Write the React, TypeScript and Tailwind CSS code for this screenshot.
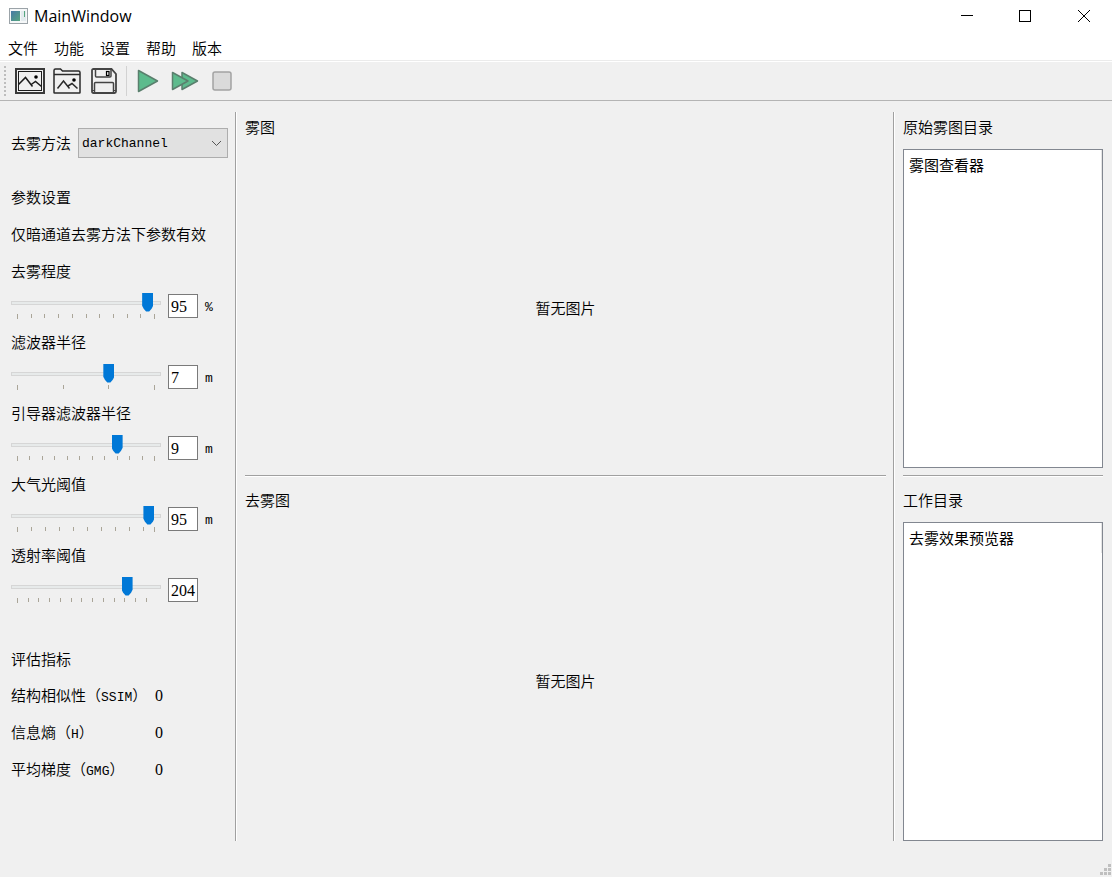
import React, { useState } from 'react';

type SliderDef = {
  id: string;
  label: string;
  min: number;
  max: number;
  step: number;
  initial: number;
  unit: string;
};

const SLIDERS: SliderDef[] = [
  { id: 'degree', label: '去雾程度', min: 0, max: 100, step: 10, initial: 95, unit: '%' },
  { id: 'radius', label: '滤波器半径', min: 1, max: 10, step: 3, initial: 7, unit: 'm' },
  { id: 'guided', label: '引导器滤波器半径', min: 1, max: 12, step: 1, initial: 9, unit: 'm' },
  { id: 'light', label: '大气光阈值', min: 1, max: 99, step: 10, initial: 95, unit: 'm' },
  { id: 'trans', label: '透射率阈值', min: 0, max: 255, step: 20, initial: 204, unit: '' },
];

const METRICS = [
  { name: '结构相似性', code: 'SSIM', value: '0' },
  { name: '信息熵', code: 'H', value: '0' },
  { name: '平均梯度', code: 'GMG', value: '0' },
];

const MENUS = ['文件', '功能', '设置', '帮助', '版本'];

const MONO = "font-['Liberation_Mono','Noto_Sans_CJK_SC',monospace] text-[13px]";
const DIGITS = "font-['Liberation_Serif','Noto_Sans_CJK_SC',serif] text-base";

// Length of the thumb's travel and where it starts inside the 150px track
const TRAVEL = 137;
const TRAVEL_START = 6;

const Ticks: React.FC<{ def: SliderDef }> = ({ def }) => {
  const values: number[] = [];
  for (let v = def.min; v < def.max; v += def.step) {
    // a mark right next to the end mark would be drawn twice
    if (def.max - v >= def.step / 2) values.push(v);
  }
  if (def.id !== 'trans') values.push(def.max);

  return (
    <svg width="150" height="5" className="block" fill="#aaa598" shapeRendering="crispEdges" aria-hidden="true">
      {values.map((v) => {
        const x = TRAVEL_START + Math.round(((v - def.min) / (def.max - def.min)) * TRAVEL);
        return <rect key={v} x={x} y="0" width="1" height={v === def.min || v === def.max ? 5 : 4} />;
      })}
    </svg>
  );
};

const ParamSlider: React.FC<{ def: SliderDef }> = ({ def }) => {
  const [value, setValue] = useState(def.initial);

  return (
    <div>
      <label htmlFor={def.id} className="block h-5 leading-5">{def.label}</label>
      <div className="flex items-center gap-[7px] pt-3 pb-[13px]">
        <div className="w-[150px]">
          <div className="pt-2 pb-[9px]">
            <input
              id={def.id}
              type="range"
              min={def.min}
              max={def.max}
              value={value}
              onChange={(e) => setValue(Number(e.target.value))}
              className="block h-1 w-full appearance-none border border-[#d6d6d6] bg-[#e7eaea] outline-none [&::-webkit-slider-thumb]:-mt-0.5 [&::-webkit-slider-thumb]:h-[19px] [&::-webkit-slider-thumb]:w-[11px] [&::-webkit-slider-thumb]:appearance-none [&::-webkit-slider-thumb]:bg-[#0078d7] [&::-webkit-slider-thumb]:[clip-path:polygon(0_0,100%_0,100%_70%,86%_85%,64%_100%,36%_100%,14%_85%,0_70%)]"
            />
          </div>
          <Ticks def={def} />
        </div>
        <input
          type="text"
          aria-label={def.label}
          value={value}
          onChange={(e) => setValue(Number(e.target.value) || 0)}
          className={`h-6 w-[30px] border border-[#7a7a7a] bg-white pt-0.5 pl-0.5 outline-none ${DIGITS}`}
        />
        <span className={`pt-1 ${MONO}`}>{def.unit}</span>
      </div>
    </div>
  );
};

const OpenImageIcon = () => (
  <svg width="30" height="26" viewBox="0 0 30 26" fill="none" stroke="#1c1c1c" strokeWidth="1.5">
    <rect x="1" y="1" width="28" height="24" stroke="#3a3a3a" strokeWidth="2" />
    <rect x="3.5" y="3.5" width="23" height="19" strokeWidth="1" />
    <path d="M3.500 16.500l7-7 7 9M15.500 17l5-3.500 6 5" />
    <circle cx="21" cy="9" r="1.8" fill="#000" stroke="none" />
  </svg>
);

const OpenFolderIcon = () => (
  <svg width="28" height="26" viewBox="0 0 28 26" fill="none" stroke="#2a2a2a" strokeWidth="1.5">
    <path d="M1 24.500v-22q0-1.500 1.500-1.500h5l2 2h16q1.500 0 1.500 1.500v20q0 .5-.5.5h-25q-.5 0-.5-.5zM1 6.500h26" />
    <path d="M4.500 20.500l6-7.500 6 7.500M15 18l4-2.500 5.500 5" />
    <circle cx="21" cy="12" r="1.8" fill="#000" stroke="none" />
  </svg>
);

const SaveIcon = () => (
  <svg width="26" height="26" viewBox="0 0 26 26" fill="none" stroke="#444" strokeWidth="1.8">
    <path d="M2.500 1h18l4.500 5v17.500q0 1.500-1.500 1.500h-21q-1.500 0-1.500-1.500v-21q0-1.500 1.500-1.500z" />
    <path d="M4.500 1v7q0 1 1 1h13.500q1 0 1-1v-7M3.500 25v-9.500q0-1 1-1h17q1 0 1 1v9.500" strokeWidth="1.5" />
    <rect x="15.500" y="3.500" width="2.500" height="4" stroke="#000" strokeWidth="1.2" />
    <path d="M1 22.500h2.500M22.500 22.500h2.500" strokeWidth="1" />
  </svg>
);

const PlayIcon = () => (
  <svg width="22" height="24" viewBox="0 0 22 24" fill="#5dbb8d" stroke="#5a7f6d" strokeWidth="1.5" strokeLinejoin="round">
    <path d="M1.500 1.500l19 10.500-19 10.500z" />
  </svg>
);

const FastForwardIcon = () => (
  <svg width="28" height="20" viewBox="0 0 28 20" fill="#5dbb8d" stroke="#5a7f6d" strokeWidth="1.5" strokeLinejoin="round">
    <path d="M11 1.500l15.500 8.500-15.500 8.500z" />
    <path d="M1.500 1.500l15.500 8.500-15.500 8.500z" />
  </svg>
);

const StopIcon = () => (
  <svg width="20" height="20" viewBox="0 0 20 20" fill="#dadada" stroke="#a3a3a3" strokeWidth="1.5">
    <rect x="1" y="1" width="18" height="18" rx="2" />
  </svg>
);

const ToolButton: React.FC<{ title: string; children: React.ReactNode }> = ({ title, children }) => (
  <button type="button" aria-label={title} className="flex h-full w-[37px] items-center justify-center">
    {children}
  </button>
);

const TitleBar = () => (
  <header className="flex h-8 items-center bg-white">
    <svg width="20" height="16" viewBox="0 0 20 16" className="ml-2 mr-1.5" aria-hidden="true">
      <defs>
        <linearGradient id="app-pane" x1="0" y1="0" x2="1" y2="1">
          <stop offset="0" stopColor="#4779a5" />
          <stop offset="1" stopColor="#57a67f" />
        </linearGradient>
      </defs>
      <rect x="1.5" y="0.5" width="18" height="15" fill="#f5f7f8" stroke="#9ba3a8" />
      <rect x="3" y="3" width="9" height="10" fill="url(#app-pane)" />
      <rect x="13" y="3" width="5" height="10" fill="#e3ebee" />
      <rect x="16" y="3" width="1" height="6" fill="#57a67f" />
    </svg>
    <h1 className="flex-1 font-['Open_Sans',sans-serif] text-base leading-5">MainWindow</h1>
    <div className="flex h-full">
      <button type="button" aria-label="最小化" className="flex w-[58px] items-center justify-center">
        <svg width="12" height="12" stroke="#000" shapeRendering="crispEdges"><path d="M0 5.500h12" /></svg>
      </button>
      <button type="button" aria-label="最大化" className="flex w-[58px] items-center justify-center">
        <svg width="12" height="12" fill="none" stroke="#000" shapeRendering="crispEdges"><rect x="0.5" y="0.5" width="11" height="11" /></svg>
      </button>
      <button type="button" aria-label="关闭" className="flex w-[58px] items-center justify-center pl-0.5">
        <svg width="12" height="12" fill="none" stroke="#000"><path d="M0 0l12 12M12 0l-12 12" /></svg>
      </button>
    </div>
  </header>
);

const Toolbar = () => (
  <div role="toolbar" className="flex h-[41px] border-t border-b border-t-[#ebebeb] border-b-[#b4b4b4] shadow-[inset_0_1px_0_#fff]">
    <div className="flex w-[11px] items-center pl-1">
      <svg width="2" height="30" fill="#bdbdbd" shapeRendering="crispEdges" aria-hidden="true">
        {[0, 4, 8, 12, 16, 20, 24, 28].map((y) => <rect key={y} x="0" y={y} width="2" height="2" />)}
      </svg>
    </div>
    <ToolButton title="打开图片"><OpenImageIcon /></ToolButton>
    <ToolButton title="打开文件夹"><OpenFolderIcon /></ToolButton>
    <ToolButton title="保存"><SaveIcon /></ToolButton>
    <div className="flex w-[7px] items-center justify-end pr-0.5">
      <div className="h-[30px] w-px bg-[#d2d2d2]" />
    </div>
    <ToolButton title="运行"><PlayIcon /></ToolButton>
    <ToolButton title="批量运行"><FastForwardIcon /></ToolButton>
    <ToolButton title="停止"><StopIcon /></ToolButton>
  </div>
);

const Divider = () => <div className="mr-2 ml-[7px] w-0.5 shrink-0 border-l border-[#a0a0a0] bg-white" />;

const HLine = () => <div className="mt-[7px] h-0.5 shrink-0 border-t border-[#a0a0a0] bg-white" />;

const ImagePanel: React.FC = () => (
  <div className="flex flex-1 items-center justify-center pb-0.5">暂无图片</div>
);

const FileList: React.FC<{ header: string }> = ({ header }) => (
  <div className="flex-1 border border-[#828790] bg-white font-normal">
    <div className="h-[30px] border-r border-[#e5e5e5] pl-[5px] leading-[30px]">{header}</div>
  </div>
);

const App: React.FC = () => {
  const [method, setMethod] = useState('darkChannel');

  return (
    <div className="flex min-h-screen flex-col bg-[#f0f0f0] font-['Noto_Sans_CJK_SC',sans-serif] text-[15px] leading-5 text-black">
      <TitleBar />
      <nav className="flex h-7 items-center gap-4 bg-white px-2 pb-px font-[350]">
        {MENUS.map((m) => (
          <button key={m} type="button" className="pt-1">{m}</button>
        ))}
      </nav>
      <Toolbar />

      <main className="flex flex-1 pt-[11px] pr-[9px] pl-[11px] font-[350]">
        {/* Parameters and metrics */}
        <aside className="w-[217px] shrink-0 pt-4">
          <div className="flex items-center gap-[7px]">
            <label htmlFor="method" className="shrink-0">去雾方法</label>
            <div className="relative flex-1">
              <select
                id="method"
                value={method}
                onChange={(e) => setMethod(e.target.value)}
                className={`block h-[30px] w-full appearance-none border border-[#adadad] bg-[#e1e1e1] pt-0.5 pl-[3px] outline-none ${MONO}`}
              >
                <option>darkChannel</option>
              </select>
              <svg width="11" height="7" fill="none" stroke="#555" className="pointer-events-none absolute top-3 right-1.5" aria-hidden="true">
                <path d="M1 1l4.500 4.500 4.500-4.500" />
              </svg>
            </div>
          </div>

          <h2 className="mt-[29px]">参数设置</h2>
          <p className="my-[17px]">仅暗通道去雾方法下参数有效</p>

          {SLIDERS.map((s) => <ParamSlider key={s.id} def={s} />)}

          <h2 className="mt-[33px]">评估指标</h2>
          <dl>
            {METRICS.map((m) => (
              <div key={m.code} className="mt-[17px] flex h-5 items-center">
                <dt className="w-36">
                  {m.name}（<span className={MONO}>{m.code}</span>）
                </dt>
                <dd className={DIGITS}>{m.value}</dd>
              </div>
            ))}
          </dl>
        </aside>

        <Divider />

        <section className="flex min-w-0 flex-1 flex-col pt-[5px]">
          <h2 className="mb-3">雾图</h2>
          <ImagePanel />
          <HLine />
          <h2 className="mt-[13px] mb-3">去雾图</h2>
          <ImagePanel />
        </section>

        <Divider />

        <section className="flex w-[200px] shrink-0 flex-col pt-[5px]">
          <h2 className="mb-3">原始雾图目录</h2>
          <FileList header="雾图查看器" />
          <HLine />
          <h2 className="mt-[13px] mb-3">工作目录</h2>
          <FileList header="去雾效果预览器" />
        </section>
      </main>

      <footer className="flex h-9 items-end justify-end pr-px pb-0.5">
        <svg width="11" height="11" fill="#bfbfbf" shapeRendering="crispEdges" aria-hidden="true">
          <rect x="8" y="0" width="3" height="3" />
          <rect x="4" y="4" width="3" height="3" />
          <rect x="8" y="4" width="3" height="3" />
          <rect x="0" y="8" width="3" height="3" />
          <rect x="4" y="8" width="3" height="3" />
          <rect x="8" y="8" width="3" height="3" />
        </svg>
      </footer>
    </div>
  );
};

export default App;
